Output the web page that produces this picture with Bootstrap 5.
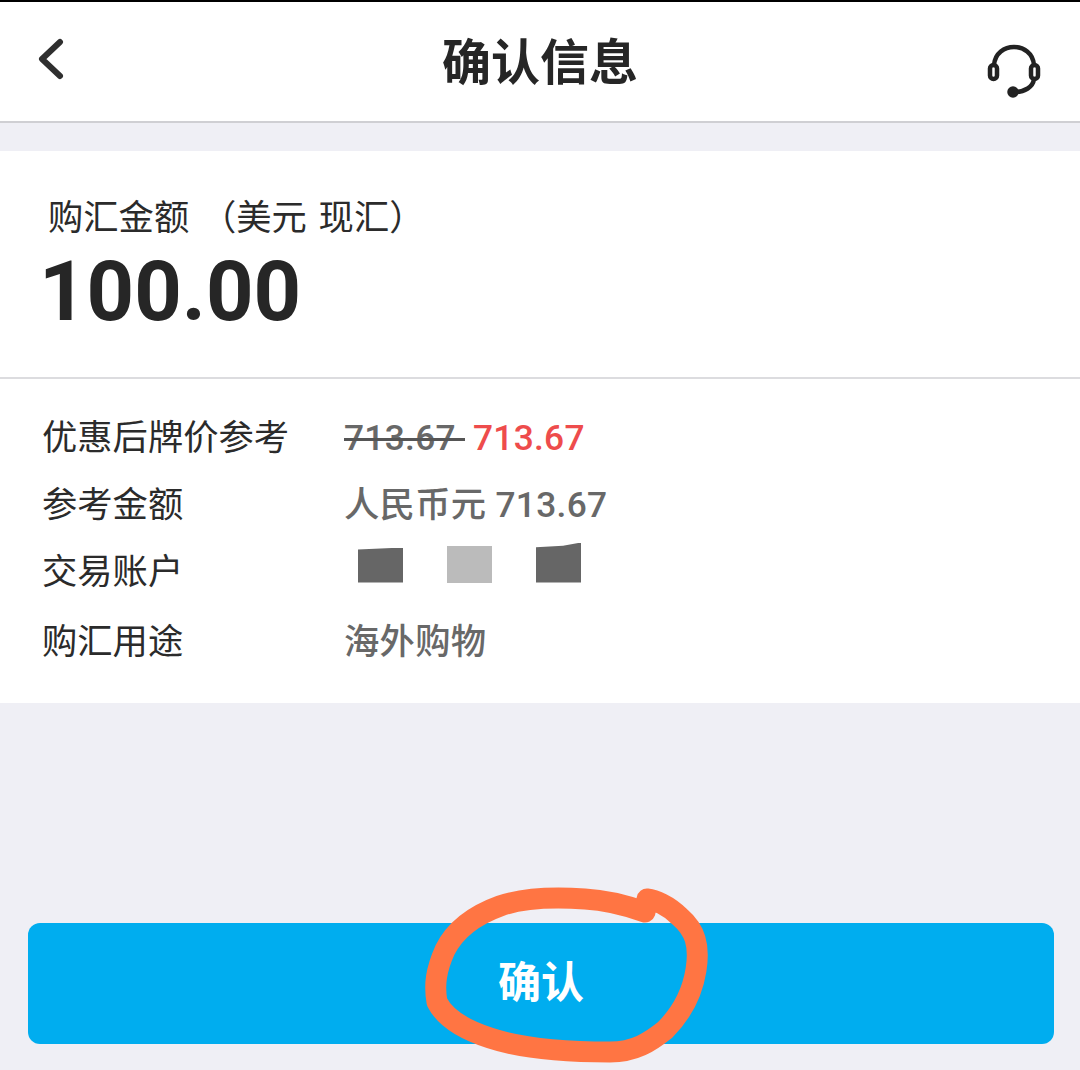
<!DOCTYPE html>
<html lang="zh-CN">
<head>
  <meta charset="UTF-8" />
  <meta name="viewport" content="width=device-width, initial-scale=1.0" />
  <title>确认信息</title>
  <link href="https://cdn.jsdelivr.net/npm/bootstrap@5.3.0/dist/css/bootstrap.min.css" rel="stylesheet" />
  <style>
    body {
      background: #efeff5;
      font-family: Roboto, "Noto Sans CJK SC", sans-serif;
      color: #2b2b2b;
      height: 1070px;
      overflow: hidden;
    }
    .screen { position: relative; height: 1070px; border-top: 2px solid #000; }
    .top-bar {
      height: 121px;
      background: #fff;
      border-bottom: 2px solid #cfcfd3;
      padding: 0 39px;
    }
    .top-icon { width: 56px; flex: none; }
    .top-icon-left { margin-left: -3px; margin-right: 3px; }
    .top-icon-right { margin-top: 18px; }
    .top-title { font-size: 49px; font-weight: 700; line-height: 1; color: #262626; margin-top: 3px; }
    .amount-box {
      margin-top: 28px;
      height: 228px;
      background: #fff;
      border-bottom: 2px solid #dcdcdf;
      padding: 44px 0 0 48px;
    }
    .amount-label { font-size: 35.3px; line-height: 46px; color: #2b2b2b; word-spacing: 3px; }
    .amount-num { font-size: 83px; font-weight: 700; line-height: 92px; margin: 5px 0 0 -9px; color: #262626; }
    .detail-box { height: 324px; background: #fff; padding: 26px 0 0 42px; }
    .detail-row { height: 67px; font-size: 35.3px; line-height: 1; }
    .detail-row-last { margin-top: 3px; }
    .detail-key { width: 302px; flex: none; color: #2b2b2b; }
    .detail-val { color: #686868; font-weight: 500; letter-spacing: .3px; }
    .old-price { position: relative; display: inline-block; padding-right: 9px; }
    .old-price::after {
      content: "";
      position: absolute;
      left: 0;
      right: 0;
      top: 50%;
      height: 3px;
      background: #555;
    }
    .new-price { color: #ee4c4c; margin-left: 8px; }
    .mask-list { gap: 44px; height: 44px; margin: -24px 0 0 14px; }
    .mask-item { width: 45px; background: #666; }
    .mask-a { height: 35px; clip-path: polygon(0 6%, 100% 0, 100% 100%, 0 100%); }
    .mask-b { height: 37px; background: #bbb; }
    .mask-c { height: 40px; clip-path: polygon(0 12%, 60% 8%, 100% 0, 100% 100%, 0 100%); }
    .confirm-wrap { padding: 220px 26px 0 28px; }
    .confirm-btn {
      width: 100%;
      height: 121px;
      background: #00adef;
      border: 0;
      border-radius: 12px;
      color: #fff;
      font-size: 43px;
      font-weight: 700;
      line-height: 1;
      padding: 0;
    }
    .scribble { position: absolute; left: 0; top: -2px; pointer-events: none; }
  </style>
</head>
<body>
  <div class="screen">
    <div class="top-bar d-flex align-items-center justify-content-between">
      <div class="top-icon top-icon-left">
        <svg width="32" height="48" viewBox="0 0 32 48" fill="none" stroke="#2f2f2f" stroke-width="6" stroke-linecap="round" stroke-linejoin="round"><path d="M24 4 L6 21 L24 38"/></svg>
      </div>
      <div class="top-title">确认信息</div>
      <div class="top-icon top-icon-right text-end">
        <svg width="56" height="56" viewBox="0 0 56 56" fill="none" stroke="#222" stroke-width="4.5" stroke-linecap="round"><path d="M9 22 C11 -2 47 -2 49 22"/><rect x="5" y="22" width="7" height="14" rx="3.5"/><rect x="46" y="22" width="7" height="14" rx="3.5"/><path d="M49 36 C48 44 40 49 29 49"/><circle cx="28" cy="49" r="3.5" fill="#222"/></svg>
      </div>
    </div>

    <div class="amount-box">
      <div class="amount-label">购汇金额 （美元 现汇）</div>
      <div class="amount-num">100.00</div>
    </div>

    <div class="detail-box">
      <div class="detail-row d-flex align-items-center">
        <div class="detail-key">优惠后牌价参考</div>
        <div class="detail-val"><span class="old-price">713.67</span><span class="new-price">713.67</span></div>
      </div>
      <div class="detail-row d-flex align-items-center">
        <div class="detail-key">参考金额</div>
        <div class="detail-val">人民币元 713.67</div>
      </div>
      <div class="detail-row d-flex align-items-center">
        <div class="detail-key">交易账户</div>
        <div class="mask-list d-flex align-items-end">
          <div class="mask-item mask-a"></div>
          <div class="mask-item mask-b"></div>
          <div class="mask-item mask-c"></div>
        </div>
      </div>
      <div class="detail-row detail-row-last d-flex align-items-center">
        <div class="detail-key">购汇用途</div>
        <div class="detail-val">海外购物</div>
      </div>
    </div>

    <div class="confirm-wrap">
      <button type="button" class="btn confirm-btn">确认</button>
    </div>

    <svg class="scribble" width="1080" height="1070" viewBox="0 0 1080 1070" fill="none" stroke="#ff7543" stroke-width="21" stroke-linecap="round" stroke-linejoin="round"><path d="M645 912 C625 905 605 900 585 899 C555 897 525 897 500 906 C475 915 455 930 445 950 C436 970 434 985 437 1002 C445 1018 465 1030 490 1038 C520 1048 560 1052 610 1052 C635 1052 650 1042 665 1030 C680 1015 692 995 696 970 C700 945 695 930 680 917 C668 905 655 900 647 899"/></svg>
  </div>
  <script src="https://cdn.jsdelivr.net/npm/bootstrap@5.3.0/dist/js/bootstrap.bundle.min.js"></script>
</body>
</html>
